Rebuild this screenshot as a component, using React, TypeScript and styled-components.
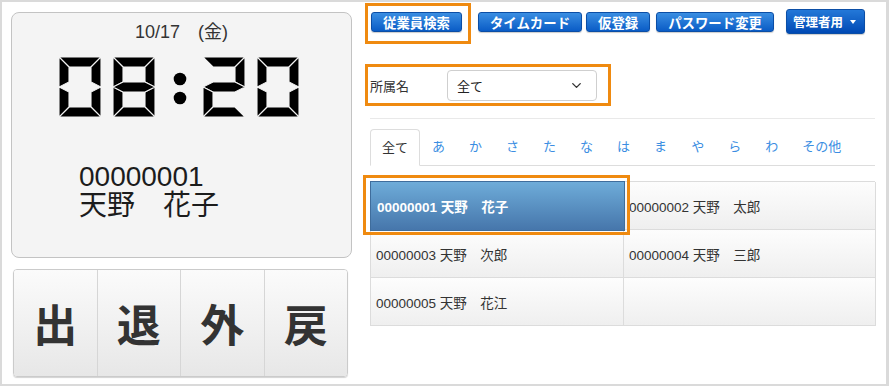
import React from "react";
import styled, { createGlobalStyle } from "styled-components";
import { ChevronDown } from "lucide-react";

const GlobalStyle = createGlobalStyle`
  html, body { margin: 0; padding: 0; background: #fff; }
  body { font-family: "Liberation Sans", "Noto Sans CJK JP", sans-serif; color: #333; }
`;

const Frame = styled.div`
  box-sizing: border-box;
  width: 889px;
  height: 386px;
  border: 2px solid #dadada;
  border-right-width: 3px;
  background: #fff;
  display: flex;
  overflow: hidden;
`;

/* ---------- left column ---------- */
const LeftColumn = styled.div`
  width: 341px;
  margin-left: 9px;
  padding-top: 10px;
  display: flex;
  flex-direction: column;
`;

const ClockPanel = styled.div`
  box-sizing: border-box;
  height: 246px;
  border: 1px solid #c3c3c3;
  border-radius: 8px;
  background: #f4f4f4;
  padding-top: 8px;
  display: flex;
  flex-direction: column;
`;

const DateLine = styled.div`
  font-size: 18px;
  line-height: 22px;
  text-align: center;
  color: #333;
`;

const ClockRow = styled.div`
  display: flex;
  gap: 12px;
  margin-top: 14px;
  padding-left: 47px;
  height: 60px;
`;

const NameBlock = styled.div`
  margin-top: 45px;
  padding-left: 67px;
  font-size: 28px;
  line-height: 29px;
  color: #1c1c1c;
`;

const PunchGroup = styled.div`
  box-sizing: border-box;
  margin: 11px 0 0 2px;
  width: 335px;
  height: 108px;
  display: flex;
  border: 1px solid #cbcbcb;
  border-radius: 4px;
  overflow: hidden;
  box-shadow: 0 1px 1px rgba(0, 0, 0, 0.18);
`;

const PunchButton = styled.button`
  flex: 1;
  border: none;
  border-right: 1px solid #d6d6d6;
  &:last-child { border-right: none; }
  background: linear-gradient(#fbfbfb, #e7e7e7);
  font-family: "Noto Sans CJK JP", sans-serif;
  font-weight: 700;
  font-size: 44px;
  color: #333;
  padding: 0;
  display: flex;
  align-items: center;
  justify-content: center;
`;

/* ---------- seven segment drawing ---------- */
const SEG: Record<string, string> = {
  a: "0,0 42,0 32,10 10,10",
  b: "42,0 42,30 32,25 32,10",
  c: "42,30 42,60 32,50 32,35",
  d: "0,60 10,50 32,50 42,60",
  e: "0,30 10,35 10,50 0,60",
  f: "0,0 10,10 10,25 0,30",
  g: "0,30 10,25 32,25 42,30 32,35 10,35",
};
const DIGITS: Record<string, string> = {
  "0": "abcdef",
  "1": "bc",
  "2": "abged",
  "3": "abgcd",
  "4": "fgbc",
  "5": "afgcd",
  "6": "afgedc",
  "7": "abc",
  "8": "abcdefg",
  "9": "abcdfg",
};

const Digit = ({ value }: { value: string }) => (
  <svg width="42" height="60" viewBox="0 0 42 60">
    {DIGITS[value].split("").map((s) => (
      <polygon key={s} points={SEG[s]} fill="#000" stroke="#f4f4f4" strokeWidth="1.1" strokeLinejoin="miter" />
    ))}
  </svg>
);

const Colon = () => (
  <svg width="24" height="60" viewBox="0 0 24 60">
    <circle cx="13" cy="22" r="6.3" fill="#000" />
    <circle cx="13" cy="41" r="6.3" fill="#000" />
  </svg>
);

/* ---------- right column ---------- */
const RightColumn = styled.div`
  width: 505px;
  margin-left: 18px;
  display: flex;
  flex-direction: column;
`;

const Toolbar = styled.div`
  display: flex;
  align-items: center;
  height: 25px;
  margin-top: 7px;
  padding-left: 1px;
  gap: 4px;
`;

const Highlight = styled.div<{ $t: number; $r: number; $b: number; $l: number }>`
  position: relative;
  display: flex;
  &::after {
    content: "";
    position: absolute;
    top: ${(p) => -p.$t}px;
    right: ${(p) => -p.$r}px;
    bottom: ${(p) => -p.$b}px;
    left: ${(p) => -p.$l}px;
    border: 3px solid #ef8a10;
    pointer-events: none;
    z-index: 3;
  }
`;

const BlueButton = styled.button<{ $space?: number }>`
  box-sizing: border-box;
  height: 20px;
  margin-right: ${(p) => p.$space ?? 0}px;
  padding: 0 11px;
  border: 1px solid #0b4ea6;
  border-radius: 3px;
  background: linear-gradient(#3a8ee2, #0a5cc6);
  color: #fff;
  font-family: "Noto Sans CJK JP", sans-serif;
  font-weight: 700;
  font-size: 13.4px;
  line-height: 18px;
  white-space: nowrap;
  box-shadow: 0 1px 1px rgba(0, 0, 0, 0.2);
`;

const DropButton = styled(BlueButton)`
  height: 25px;
  padding: 0 8px 0 6px;
  font-size: 12.5px;
  background: linear-gradient(#2378d8, #0049b4);
  display: flex;
  align-items: center;
  gap: 7px;
`;

const Caret = styled.span`
  width: 0;
  height: 0;
  border-left: 3.5px solid transparent;
  border-right: 3.5px solid transparent;
  border-top: 4px solid #fff;
`;

const FilterRow = styled.div`
  display: flex;
  align-items: center;
  height: 31px;
  width: 227px;
`;

const FilterLabel = styled.span`
  width: 77px;
  font-family: "Noto Sans CJK JP", sans-serif;
  font-size: 13px;
  color: #333;
`;

const SelectBox = styled.div`
  box-sizing: border-box;
  width: 150px;
  height: 31px;
  border: 1px solid #cfcfcf;
  border-radius: 4px;
  background: #fff;
  padding: 0 12px 0 9px;
  display: flex;
  align-items: center;
  justify-content: space-between;
  font-family: "Noto Sans CJK JP", sans-serif;
  font-size: 13px;
  color: #222;
`;

const Separator = styled.div`
  height: 1px;
  background: #e9e9e9;
`;

const TabBar = styled.div`
  display: flex;
  height: 36px;
  border-bottom: 1px solid #dddddd;
`;

const Tab = styled.div<{ $active?: boolean }>`
  box-sizing: border-box;
  padding: 0 ${(p) => (p.$active ? 11 : 12)}px;
  height: ${(p) => (p.$active ? 37 : 36)}px;
  line-height: 34px;
  font-family: "Noto Sans CJK JP", sans-serif;
  font-size: 13px;
  color: ${(p) => (p.$active ? "#333" : "#3b8ee2")};
  background: ${(p) => (p.$active ? "#fff" : "transparent")};
  border: ${(p) => (p.$active ? "1px solid #dddddd" : "none")};
  border-bottom-color: #fff;
  border-radius: 4px 4px 0 0;
`;

const EmployeeGrid = styled.div`
  display: grid;
  grid-template-columns: 253px 252px;
  grid-auto-rows: 48px;
  border-top: 1px solid #dcdcdc;
  border-left: 1px solid #dcdcdc;
`;

const Cell = styled.div<{ $selected?: boolean }>`
  box-sizing: border-box;
  position: relative;
  display: flex;
  align-items: center;
  padding-left: ${(p) => (p.$selected ? 6 : 5)}px;
  border-right: 1px solid #dcdcdc;
  border-bottom: 1px solid #dcdcdc;
  background: linear-gradient(#fdfdfd, #efefef);
  font-size: 13.5px;
  color: #333;
  white-space: nowrap;
  ${(p) =>
    p.$selected &&
    `
    margin: -1px -1px -1px -1px;
    border: 1px solid #3f6d9c;
    background: linear-gradient(#6eacd9, #4676ab);
    color: #fff;
    font-weight: 700;
    z-index: 2;
    &::after {
      content: "";
      position: absolute;
      top: -7px; left: -8px; right: -6px; bottom: -5px;
      border: 3px solid #ef8a10;
      pointer-events: none;
    }
  `}
`;

const employees = [
  { id: "00000001", name: "天野　花子", selected: true },
  { id: "00000002", name: "天野　太郎" },
  { id: "00000003", name: "天野　次郎" },
  { id: "00000004", name: "天野　三郎" },
  { id: "00000005", name: "天野　花江" },
  { id: "", name: "" },
];

const tabs = ["全て", "あ", "か", "さ", "た", "な", "は", "ま", "や", "ら", "わ", "その他"];

export default function App() {
  return (
    <>
      <GlobalStyle />
      <Frame>
        <LeftColumn>
          <ClockPanel>
            <DateLine>10/17　(金)</DateLine>
            <ClockRow>
              <Digit value="0" />
              <Digit value="8" />
              <Colon />
              <Digit value="2" />
              <Digit value="0" />
            </ClockRow>
            <NameBlock>
              <div>00000001</div>
              <div>天野　花子</div>
            </NameBlock>
          </ClockPanel>
          <PunchGroup>
            <PunchButton>出</PunchButton>
            <PunchButton>退</PunchButton>
            <PunchButton>外</PunchButton>
            <PunchButton>戻</PunchButton>
          </PunchGroup>
        </LeftColumn>

        <RightColumn>
          <Toolbar>
            <Highlight $t={9} $r={9} $b={12} $l={6}>
              <BlueButton>従業員検索</BlueButton>
            </Highlight>
            <BlueButton style={{ marginLeft: 12 }}>タイムカード</BlueButton>
            <BlueButton $space={2}>仮登録</BlueButton>
            <BlueButton $space={8}>パスワード変更</BlueButton>
            <DropButton>
              管理者用
              <Caret />
            </DropButton>
          </Toolbar>

          <Highlight $t={6} $r={14} $b={5} $l={5} style={{ marginTop: 36, alignSelf: "flex-start" }}>
            <FilterRow>
              <FilterLabel>所属名</FilterLabel>
              <SelectBox>
                <span>全て</span>
                <ChevronDown size={15} strokeWidth={2.2} color="#333" />
              </SelectBox>
            </FilterRow>
          </Highlight>

          <Separator style={{ marginTop: 17 }} />

          <TabBar style={{ marginTop: 10 }}>
            {tabs.map((t, i) => (
              <Tab key={t} $active={i === 0}>
                {t}
              </Tab>
            ))}
          </TabBar>

          <EmployeeGrid style={{ marginTop: 15 }}>
            {employees.map((e, i) => (
              <Cell key={i} $selected={e.selected}>
                {e.id ? `${e.id} ${e.name}` : ""}
              </Cell>
            ))}
          </EmployeeGrid>
        </RightColumn>
      </Frame>
    </>
  );
}
